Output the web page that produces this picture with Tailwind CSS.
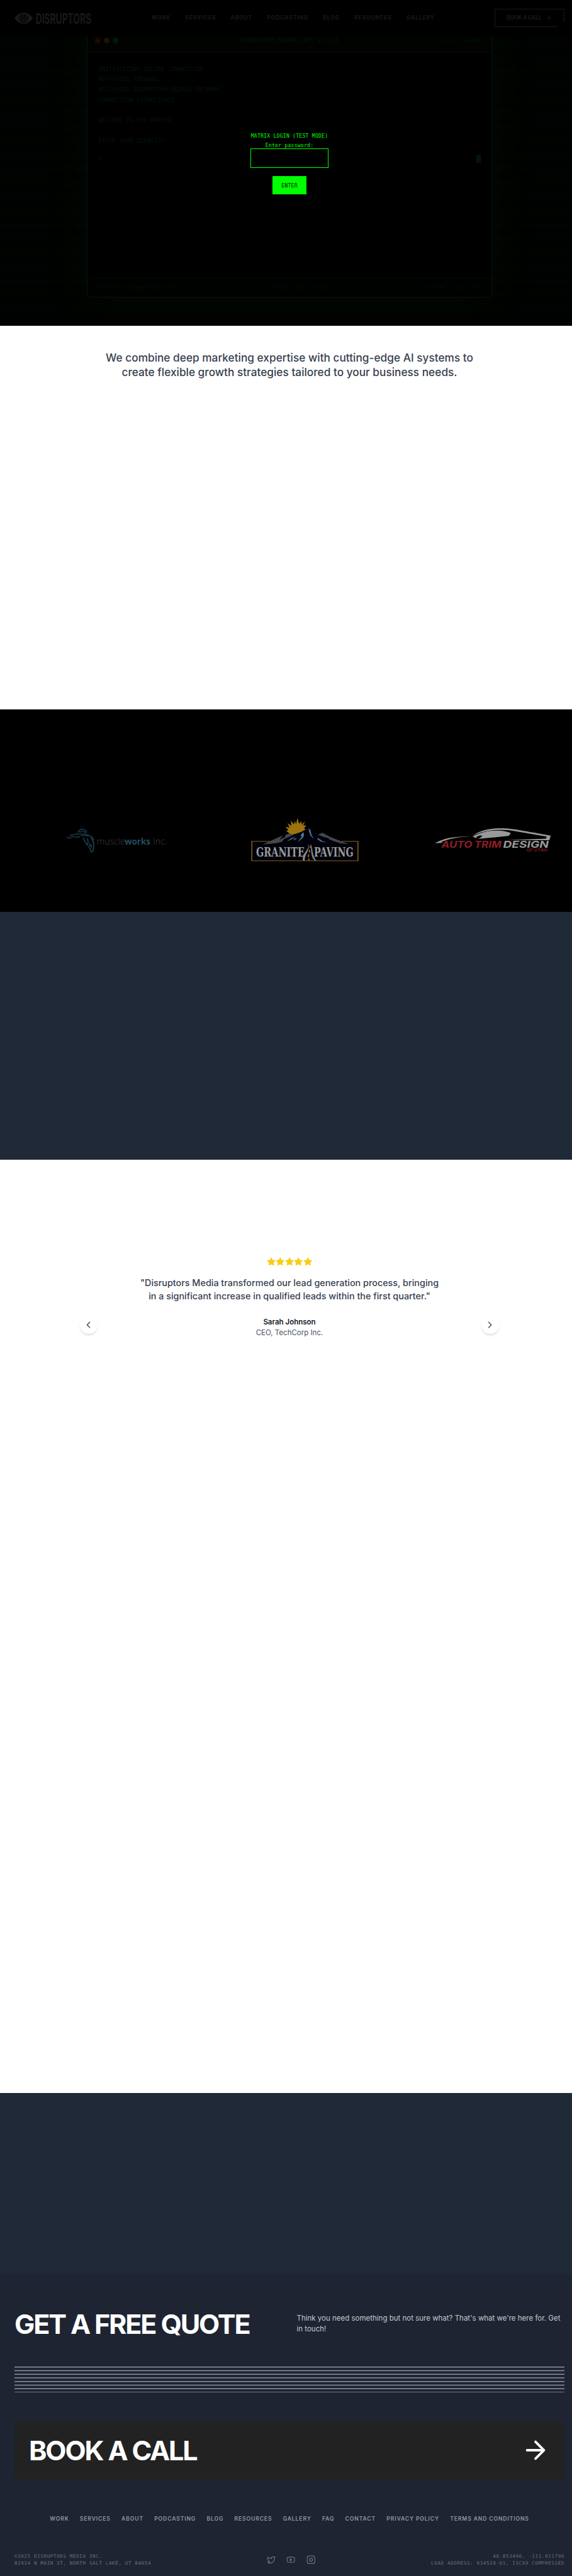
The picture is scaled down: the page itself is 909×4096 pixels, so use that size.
<!DOCTYPE html>
<html lang="en" class="text-[11.5px] bg-[#1e2431]">
<head>
<meta charset="utf-8">
<title>Disruptors Media</title>
<script src="https://cdn.jsdelivr.net/npm/@tailwindcss/browser@4"></script>
</head>
<body class="overflow-x-hidden font-['Inter',sans-serif]">
<div class="w-320">

  <!-- Hero with terminal, dimmed by the login overlay -->
  <section class="relative h-180 overflow-hidden bg-black bg-[repeating-linear-gradient(0deg,#000000_0px,#000000_1.4px,#000501_1.5px,#000501_2.87px)]">
    <header class="relative z-10 flex h-20 items-center bg-black px-8 text-[#191919]">
      <svg class="h-7 w-[10.8rem] shrink-0 overflow-visible" viewBox="0 0 173 28">
        <path d="M0 14C5 7 12 1.5 20.500 1.500S36 7 41 14C36 21 29 26.500 20.500 26.500S5 21 0 14Z" fill="#191919"/>
        <circle cx="20.500" cy="14" r="10.500" fill="#000"/>
        <g fill="none" stroke="#191919" stroke-width="1.300"><circle cx="20.500" cy="14" r="9.200"/><ellipse cx="20.500" cy="14" rx="5" ry="9.200"/><path d="M20.500 5V23M11 14H30M13 9.500H28M13 18.500H28"/></g>
        <text x="47" y="26" font-family="Inter" font-weight="700" font-size="31.500" textLength="123" lengthAdjust="spacingAndGlyphs" fill="#191919">DISRUPTORS</text>
      </svg>
      <nav class="ml-[8.13rem] flex gap-8 text-xs font-bold tracking-[0.096em]">
        <a>WORK</a><a>SERVICES</a><a>ABOUT</a><a>PODCASTING</a><a>BLOG</a><a>RESOURCES</a><a>GALLERY</a>
      </nav>
      <div class="relative ml-auto flex h-10 w-38.75 items-center justify-center gap-2 border border-[#191919] text-xs font-bold tracking-[-0.03em] whitespace-nowrap">
        <span>BOOK A CALL</span>
        <svg class="size-4" viewBox="0 0 24 24" fill="none" stroke="currentColor" stroke-width="2.200" stroke-linecap="round" stroke-linejoin="round"><path d="M5 12h14M12 5l7 7-7 7"/></svg>
        <span class="absolute -right-px -bottom-px h-3 w-3.5 bg-black"></span>
      </div>
    </header>

    <div class="absolute top-15.5 left-48 flex h-149 w-224 flex-col overflow-hidden rounded-lg border border-[#04150c] bg-black font-['DejaVu_Sans_Mono',monospace] text-[8.8px] tracking-[0.23px] text-[#04150d] shadow-[0_0_60px_rgba(0,40,15,0.25)]">
      <div class="flex h-13.5 shrink-0 items-center justify-between border-b border-[#020d06] bg-[#000300] px-4">
        <div class="flex w-23 gap-2"><span class="size-3 rounded-full bg-[#1f0708]"></span><span class="size-3 rounded-full bg-[#1d1400]"></span><span class="size-3 rounded-full bg-[#02170c]"></span></div>
        <span>DISRUPTORS_NEURAL_NET v2.1.4</span>
        <span class="w-23 text-right text-[7.55px] tracking-[0.19px] whitespace-nowrap text-[#020e07]">SECURE_CHANNEL</span>
      </div>
      <div class="grow px-6 pt-6 leading-[1.42rem] whitespace-pre">INITIALIZING SECURE CONNECTION...
BYPASSING FIREWALL...
ACCESSING DISRUPTORS NEURAL NETWORK...
CONNECTION ESTABLISHED

WELCOME TO THE MATRIX

STATE YOUR IDENTITY:
<div class="flex items-center justify-between pt-4.25"><span>&gt;</span><span class="h-4.75 w-2.25 bg-[#041509]"></span></div></div>
      <div class="flex h-10.25 shrink-0 items-center justify-between border-t border-[#020b05] bg-[#000200] px-6 text-[7.55px] tracking-[0.19px] text-[#020c06]">
        <span>ENCRYPTED CONNECTION ACTIVE</span><span>NEURAL_LINK: STABLE</span><span>UPTIME: 1:24:37 PM</span>
      </div>
    </div>

    <div class="absolute inset-x-0 top-72.75 z-20 flex flex-col items-center font-['DejaVu_Sans_Mono',monospace] text-[8.17px] leading-5 tracking-[0.2px] text-[#00ff00]">
      <span>MATRIX LOGIN (TEST MODE)</span>
      <span>Enter password:</span>
      <div class="-mt-0.5 h-10.5 w-43 border border-[#00ff00] bg-black"></div>
      <div class="mt-4.75 flex h-10 w-19 items-center justify-center bg-[#00ff00] text-[8.17px] text-black">ENTER</div>
    </div>
  </section>

  <section class="h-212.5 bg-white pt-13.75 text-center text-2xl leading-8 font-medium text-[#374151]">
    <p>We combine deep marketing expertise with cutting-edge AI systems to<br>create flexible growth strategies tailored to your business needs.</p>
  </section>

  <!-- Client logos -->
  <section class="h-111.75 bg-black pt-52.5">
    <div class="flex pl-35">
      <svg class="h-40 w-60 shrink-0" viewBox="40 0 240 160">
        <g transform="scale(.472 .3333)" fill="none" stroke="#1f4254" stroke-width="5" stroke-linecap="round" stroke-linejoin="round">
          <path d="M151 186C156 176 160 166 170 164C182 164 192 172 192 184M162 184C172 172 184 178 188 190M102 216C104 224 110 226 116 222L128 214M114 208C120 200 128 204 138 200C156 194 174 194 190 200C208 206 222 218 226 236M124 214C142 216 152 222 160 214M166 206C186 204 196 212 204 206M176 222C182 240 190 262 198 272M196 228C202 244 202 256 194 268M214 222C226 244 230 276 222 310L218 316M206 262L218 276M204 272L216 284M202 282C210 296 214 306 214 316"/>
        </g>
        <text x="113.500" y="89.500" font-size="20" textLength="62" lengthAdjust="spacingAndGlyphs" font-family="Open Sans" font-weight="300" fill="#3c3c3c">muscle</text>
        <text x="175" y="89.500" font-size="20" textLength="57" lengthAdjust="spacingAndGlyphs" font-family="Open Sans" font-weight="700" fill="#234a5e">works</text>
        <text x="238" y="89.500" font-size="20" textLength="30" lengthAdjust="spacingAndGlyphs" font-family="Open Sans" font-weight="300" fill="#3c3c3c">Inc.</text>
      </svg>
      <svg class="ml-41.25 h-40 w-65 shrink-0 overflow-visible" viewBox="445 0 260 160">
        <g transform="scale(.472 .3333)">
          <path d="M1181 90L1188 128L1200 112L1200 136L1216 112L1208 142L1222 138L1212 160L1226 170L1150 206L1138 186L1128 178L1138 170L1124 148L1144 154L1134 124L1152 142L1150 106L1164 134L1168 110L1174 130Z" fill="#9b7310"/>
          <rect x="967" y="245" width="497" height="130" fill="#02020d"/>
          <path d="M1052 245H967V375H1464V245H1384" fill="none" stroke="#8a6010" stroke-width="4.500"/>
          <path d="M1018 266L1110 208L1140 192L1160 205L1195 186L1232 156L1278 200L1298 190L1385 244L1422 264L1240 268Z" fill="#02020d"/>
          <path d="M1018 266L1112 206L1096 236L1128 212L1108 248L1080 258ZM1124 204L1140 193L1158 206L1140 216L1122 228ZM1276 200L1298 189L1334 216L1384 244L1422 264L1380 258L1334 236L1322 222L1306 218Z" fill="#44474a"/>
          <path d="M1208 184L1212 204L1206 222L1180 252L1200 216L1196 204ZM1172 214L1160 228L1130 246L1148 228ZM1232 158L1242 172L1246 200L1258 230L1242 208L1236 186ZM1276 222L1296 242L1320 256L1290 246L1274 232ZM1180 224L1164 240L1166 228Z" fill="#4e7590"/>
          <path d="M1232 266C1240 300 1202 320 1207 373H1214C1212 330 1240 306 1232 266ZM1244 266C1246 306 1244 350 1262 373H1267C1250 340 1252 306 1244 266Z" fill="#8b8b8b" stroke="#8b8b8b" stroke-width="1.500"/>
          <path d="M1241 276V290M1238 302L1236 320M1233 332L1232 350M1233 360L1235 374" stroke="#a87b14" stroke-width="5"/>
        </g>
        <g font-family="DejaVu Serif" font-weight="700" font-size="28.800" fill="#9a9a9a">
          <text x="466" y="115" textLength="107" lengthAdjust="spacingAndGlyphs">GRANITE</text>
          <text x="594" y="115" textLength="87" lengthAdjust="spacingAndGlyphs">PAVING</text>
        </g>
      </svg>
      <svg class="ml-38.75 h-40 w-[16.667rem] shrink-0" viewBox="480 0 800 480">
        <path d="M484 258C540 226 610 212 722 213C640 216 570 230 524 251L542 255Z" fill="#999"/>
        <path d="M732 207C790 170 860 158 930 159C990 160 1030 168 1253 208L1244 238L956 237L1222 227L1226 214L1020 178C930 162 830 164 732 207Z" fill="#999"/>
        <path d="M734 213C790 184 850 172 900 174C940 174 970 182 988 190L976 209C910 216 830 224 764 230C780 226 800 216 798 208C784 204 762 210 758 224Z" fill="#999"/>
        <g font-family="Inter" font-weight="700" font-style="italic">
          <text x="528" y="288" font-size="61" textLength="204" lengthAdjust="spacingAndGlyphs" fill="#8e1c20">AUTO</text>
          <text x="746" y="288" font-size="61" textLength="180" lengthAdjust="spacingAndGlyphs" fill="#8e1c20">TRIM</text>
          <text x="937" y="288" font-size="61" textLength="302" lengthAdjust="spacingAndGlyphs" fill="#999">DESIGN</text>
          <text x="1092" y="311" font-size="25" textLength="138" lengthAdjust="spacingAndGlyphs" fill="#7d191c">OF UTAH</text>
        </g>
      </svg>
    </div>
  </section>

  <section class="h-137 bg-[#1f2937]"></section>

  <!-- Testimonial -->
  <section class="h-516.25 bg-white pt-54">
    <div class="mx-auto flex w-232 items-end justify-between">
      <button class="mb-2.5 flex size-10 items-center justify-center rounded-full bg-white text-[#4b5563] shadow-[0_3px_4px_-1px_rgba(0,0,0,0.12),0_2px_3px_-2px_rgba(0,0,0,0.1)]">
        <svg class="size-6" viewBox="0 0 24 24" fill="none" stroke="currentColor" stroke-width="2" stroke-linecap="round" stroke-linejoin="round"><path d="M15 18l-6-6 6-6"/></svg>
      </button>
      <div class="flex flex-col items-center text-center">
        <div class="flex text-[#facc15]">
          <svg class="size-5" viewBox="0 0 24 24" fill="currentColor" stroke="currentColor" stroke-width="2" stroke-linejoin="round"><polygon id="star" points="12 2 15.090 8.260 22 9.270 17 14.140 18.180 21.020 12 17.770 5.820 21.020 7 14.140 2 9.270 8.910 8.260 12 2"/></svg>
          <svg class="size-5" viewBox="0 0 24 24" fill="currentColor" stroke="currentColor" stroke-width="2" stroke-linejoin="round"><use href="#star"/></svg>
          <svg class="size-5" viewBox="0 0 24 24" fill="currentColor" stroke="currentColor" stroke-width="2" stroke-linejoin="round"><use href="#star"/></svg>
          <svg class="size-5" viewBox="0 0 24 24" fill="currentColor" stroke="currentColor" stroke-width="2" stroke-linejoin="round"><use href="#star"/></svg>
          <svg class="size-5" viewBox="0 0 24 24" fill="currentColor" stroke="currentColor" stroke-width="2" stroke-linejoin="round"><use href="#star"/></svg>
        </div>
        <p class="mt-6 text-xl leading-7 font-medium text-[#374151]">"Disruptors Media transformed our lead generation process, bringing<br>in a significant increase in qualified leads within the first quarter."</p>
        <p class="mt-8 text-base leading-6 font-semibold text-[#111827]">Sarah Johnson</p>
        <p class="text-base leading-6 text-[#4b5563]">CEO, TechCorp Inc.</p>
      </div>
      <button class="mb-2.5 flex size-10 items-center justify-center rounded-full bg-white text-[#4b5563] shadow-[0_3px_4px_-1px_rgba(0,0,0,0.12),0_2px_3px_-2px_rgba(0,0,0,0.1)]">
        <svg class="size-6" viewBox="0 0 24 24" fill="none" stroke="currentColor" stroke-width="2" stroke-linecap="round" stroke-linejoin="round"><path d="M9 18l6-6-6-6"/></svg>
      </button>
    </div>
  </section>

  <section class="h-100.25 bg-[#1f2937]"></section>

  <footer class="h-166.75 bg-[#1e2431] px-8 pt-20">
    <div class="grid grid-cols-2 gap-8">
      <h2 class="text-[3.75rem] leading-15 font-bold tracking-[-0.05em] whitespace-nowrap text-white">GET A FREE QUOTE</h2>
      <p class="pt-1.5 text-base leading-6 text-[#c7c9ce]">Think you need something but not sure what? That's what we're here for. Get in touch!</p>
    </div>
    <svg class="mt-16 block h-14.5 w-full" viewBox="0 0 1216 58" preserveAspectRatio="none"><path d="M0 1H1216M0 9H1216M0 17H1216M0 25H1216M0 33H1216M0 41H1216M0 49H1216M0 57H1216" stroke="#8f929b" stroke-width="2"/></svg>
    <div class="mt-16 flex h-32 items-center justify-between bg-[#222222] px-8 text-white">
      <span class="text-[3.75rem] leading-15 font-bold tracking-[-0.05em]">BOOK A CALL</span>
      <svg class="size-16" viewBox="0 0 24 24" fill="none" stroke="currentColor" stroke-width="2" stroke-linecap="round" stroke-linejoin="round"><path d="M5 12h14M12 5l7 7-7 7"/></svg>
    </div>
    <nav class="mt-20 flex justify-center gap-6 text-xs leading-4 font-semibold tracking-[0.1em] whitespace-nowrap text-[#9296a3]">
      <a>WORK</a><a>SERVICES</a><a>ABOUT</a><a>PODCASTING</a><a>BLOG</a><a>RESOURCES</a><a>GALLERY</a><a>FAQ</a><a>CONTACT</a><a>PRIVACY POLICY</a><a>TERMS AND CONDITIONS</a>
    </nav>
    <div class="mt-16.5 flex items-center justify-between font-['DejaVu_Sans_Mono',monospace] text-[7.55px] leading-4 tracking-[0.625px] whitespace-nowrap text-[#6b7180]">
      <p>©2025 DISRUPTORS MEDIA INC.<br>82924 N MAIN ST, NORTH SALT LAKE, UT 84054</p>
      <div class="flex gap-6">
        <svg class="size-5" viewBox="0 0 24 24" fill="none" stroke="currentColor" stroke-width="2" stroke-linecap="round" stroke-linejoin="round"><path d="M22 4s-.7 2.100-2 3.400c1.600 10-9.400 17.300-18 11.600 2.200.1 4.400-.6 6-2C3 15.500.5 9.600 3 5c2.200 2.600 5.600 4.100 9 4-.9-4.200 4-6.600 7-3.800 1.100 0 3-1.200 3-1.200z"/></svg>
        <svg class="size-5" viewBox="0 0 24 24" fill="none" stroke="currentColor" stroke-width="2" stroke-linecap="round" stroke-linejoin="round"><path d="M2.500 17a24.120 24.120 0 0 1 0-10 2 2 0 0 1 1.400-1.400 49.560 49.560 0 0 1 16.200 0A2 2 0 0 1 21.500 7a24.120 24.120 0 0 1 0 10 2 2 0 0 1-1.400 1.400 49.550 49.550 0 0 1-16.200 0A2 2 0 0 1 2.500 17M10 15l5-3-5-3z"/></svg>
        <svg class="size-5" viewBox="0 0 24 24" fill="none" stroke="currentColor" stroke-width="2" stroke-linecap="round" stroke-linejoin="round"><rect x="2" y="2" width="20" height="20" rx="5"/><circle cx="12" cy="12" r="4"/><path d="M17.500 6.500h.01"/></svg>
      </div>
      <p class="text-right">40.853490, -111.911790<br>LOAD ADDRESS: 034520-01, ISCXX COMPRESSED</p>
    </div>
  </footer>
</div>
</body>
</html>
